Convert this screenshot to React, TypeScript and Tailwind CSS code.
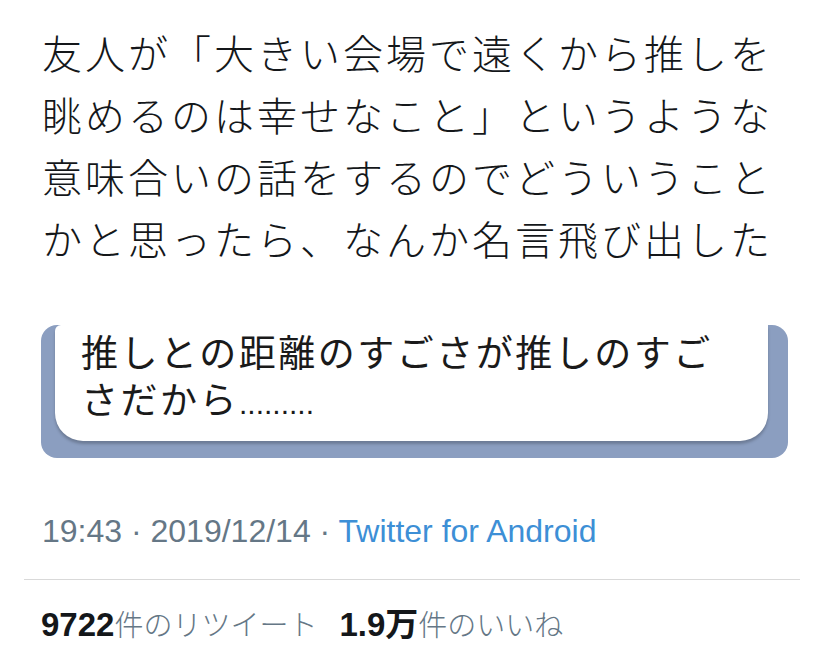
export default function App() {
  const lines = [
    "友人が「大きい会場で遠くから推しを",
    "眺めるのは幸せなこと」というような",
    "意味合いの話をするのでどういうこと",
    "かと思ったら、なんか名言飛び出した",
  ];

  return (
    <div className="w-[828px] h-[653px] bg-white overflow-hidden">
      <div
        className="pl-[42px] pt-[21px] text-[40px] leading-[62px] tracking-[3px] font-light text-[#14171a] whitespace-nowrap"
        style={{ fontFamily: '"Noto Sans CJK JP", sans-serif' }}
      >
        {lines.map((l) => (
          <div key={l}>{l}</div>
        ))}
      </div>

      {/* quoted image */}
      <div className="mt-[56px] ml-[41px] w-[747px] h-[133px] rounded-[16px] bg-[#8b9ec0] overflow-hidden">
        <div className="ml-[14px] w-[713px] h-[116px] bg-white rounded-tl-[6px] rounded-b-[28px] shadow-[0_3px_3px_rgba(0,0,0,0.22)]">
          <div
            className="pl-[26px] pt-[1px] text-[37px] leading-[50px] tracking-[2.5px] font-normal text-[#1a1a1a] whitespace-nowrap"
            style={{ fontFamily: '"Noto Sans CJK JP", sans-serif' }}
          >
            <div>推しとの距離のすごさが推しのすご</div>
            <div className="-mt-[3px]">
              さだから
              <span
                className="tracking-normal text-[30px]"
                style={{ fontFamily: '"Liberation Sans", sans-serif' }}
              >
                .........
              </span>
            </div>
          </div>
        </div>
      </div>

      <div
        className="mt-[53px] pl-[42px] text-[32px] leading-[40px] text-[#657786] whitespace-nowrap"
        style={{ fontFamily: '"Liberation Sans", "Noto Sans CJK JP", sans-serif' }}
      >
        19:43 · 2019/12/14 · <span className="text-[#3d8fd6]">Twitter for Android</span>
      </div>

      <div className="mt-[28px] ml-[24px] mr-[28px] h-px bg-[#d9d9d9]" />

      <div
        className="mt-[25px] pl-[41px] text-[29px] leading-[40px] text-[#657786] whitespace-nowrap"
        style={{ fontFamily: '"Liberation Sans", "Noto Sans CJK JP", sans-serif' }}
      >
        <span className="text-[33px] font-bold text-[#14171a]">9722</span>
        <span className="font-light">件のリツイート</span>
        <span className="ml-[22px] text-[33px] font-bold text-[#14171a]">1.9万</span>
        <span className="font-light">件のいいね</span>
      </div>
    </div>
  );
}
